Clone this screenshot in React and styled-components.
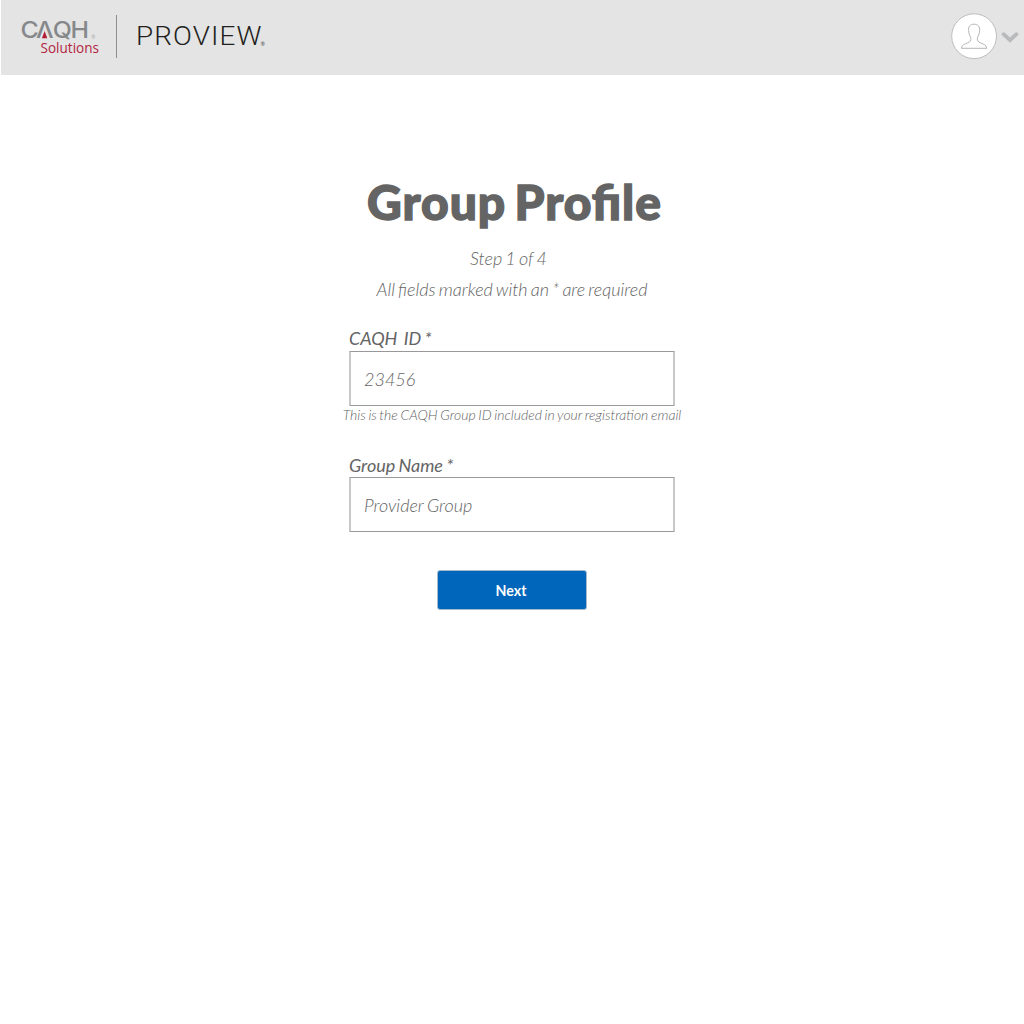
import React from "react";
import styled, { createGlobalStyle } from "styled-components";

const GlobalStyle = createGlobalStyle`
  *, *::before, *::after { box-sizing: border-box; }
  body { margin: 0; background: #fff; font-family: Lato, "Open Sans", sans-serif; color: #646464; }
`;

const Page = styled.div`
  min-height: 1024px;
  background: #fff;
`;

const Header = styled.header`
  display: flex;
  align-items: flex-start;
  justify-content: space-between;
  height: 75px;
  margin-left: 1px;
  background: #e4e4e4;
`;

const Brand = styled.div`
  display: flex;
  align-items: flex-start;
`;

const Logo = styled.svg`
  display: block;
  width: 90px;
  height: 44px;
  margin: 15px 0 0 19px;
`;

const Divider = styled.div`
  width: 1px;
  height: 43px;
  margin: 15px 0 0 6px;
  background: #8b8d8f;
`;

const Product = styled.svg`
  display: block;
  width: 136px;
  height: 40px;
  margin: 15px 0 0 16px;
`;

const Account = styled.button`
  display: flex;
  align-items: center;
  gap: 3px;
  margin: 13px 5px 0 0;
  padding: 0;
  border: 0;
  background: none;
`;

const Icon = styled.svg`
  display: block;
  flex: none;
  width: ${(p) => p.$w}px;
  height: ${(p) => p.$h}px;
`;

const Form = styled.form`
  display: flex;
  flex-direction: column;
  align-items: center;
  padding-top: 98px;
`;

const Title = styled.h1`
  margin: 0 0 12px;
  padding-left: 5px;
  font-family: "Lato Black", Lato, sans-serif;
  font-size: 48px;
  font-weight: 900;
  line-height: 58px;
  letter-spacing: 0.95px;
  word-spacing: -4px;
  font-feature-settings: "liga" 1;
  -webkit-text-stroke: 1.4px #646464;
  white-space: nowrap;
`;

const Note = styled.p`
  margin: 0;
  padding-right: ${(p) => p.$shift || 0}px;
  font-size: 18px;
  font-style: italic;
  font-weight: 300;
  line-height: 31px;
  word-spacing: -1.4px;
  white-space: nowrap;
`;

const Field = styled.div`
  display: flex;
  flex-direction: column;
  width: 326px;
  margin-top: ${(p) => p.$gap}px;
`;

const Label = styled.label`
  height: ${(p) => p.$h}px;
  font-size: 18px;
  font-style: italic;
  font-weight: 400;
  line-height: 24px;
  word-spacing: -1px;
  white-space: pre;
`;

const Input = styled.input`
  width: 326px;
  height: 55px;
  padding: 0 13px;
  border: solid #999;
  border-width: 1px 2px;
  border-left-color: #c8c8c8;
  border-right-color: #c8c8c8;
  border-radius: 0;
  background: #fff;
  color: #646464;
  font: italic 300 18px Lato, sans-serif;
  word-spacing: -1px;
  outline: none;
`;

const Hint = styled.p`
  align-self: center;
  margin: 0;
  font-size: 14px;
  font-style: italic;
  font-weight: 300;
  line-height: 17px;
  word-spacing: -0.9px;
  white-space: nowrap;
`;

const Next = styled.button`
  width: 150px;
  height: 40px;
  margin-top: 38px;
  padding: 0 2px 0 0;
  border: 1px solid #a5b9cd;
  border-radius: 3px;
  background: #0066bb;
  color: #fff;
  font: 700 14.2px Lato, sans-serif;
`;

export default function App() {
  return (
    <Page>
      <GlobalStyle />
      <Header>
        <Brand>
          <Logo viewBox="20 15 90 44" role="img" aria-label="CAQH Solutions">
            <g transform="translate(20.4 0) scale(1.08 1)" fill="#86888b" fontFamily="Inter, sans-serif" fontWeight="500" fontSize="23">
              <text x="0 14.4 30 46.3" y="38">CΛQH</text>
            </g>
            <path d="M44.6 31 L47.3 38.2 H41.9 Z" fill="#b01c38" />
            <text x="91.3" y="38.5" fill="#a5a6a8" fontFamily="Lato, sans-serif" fontSize="5">®</text>
            <text x="40.5" y="53" fill="#b3243f" fontFamily="Open Sans, sans-serif" fontSize="14.8" textLength="58.5" lengthAdjust="spacingAndGlyphs">Solutions</text>
          </Logo>
          <Divider />
          <Product viewBox="133 15 136 40" role="img" aria-label="PROVIEW">
            <text x="136" y="45" fill="#231f20" fontFamily="Roboto, sans-serif" fontWeight="300" fontSize="25.5" letterSpacing="1" textLength="126.5" lengthAdjust="spacingAndGlyphs">PROVIEW</text>
            <text x="260.5" y="46" fill="#444" fontFamily="Lato, sans-serif" fontSize="5.5">®</text>
          </Product>
        </Brand>
        <Account type="button" aria-label="Account">
          <Icon $w={47} $h={47} viewBox="0 0 47 47" fill="none">
            <circle cx="23.1" cy="23.2" r="22.4" fill="#fff" stroke="#bcbdc2" />
            <path
              d="M23 11.2c-4 0-5.8 2.5-5.4 6.2.2 3.6 1.5 5.8 2.2 7.4.4 2.6-.7 4.1-2.9 5-3.2 1.3-6.2 1.9-6.4 5.5h25.2c-.2-3.6-3.2-4.2-6.4-5.5-2.2-.9-3.3-2.4-2.9-5 .7-1.6 2-3.8 2.2-7.4.4-3.7-1.6-6.2-5.6-6.2z"
              stroke="#b4b6b6"
              strokeWidth="1"
            />
          </Icon>
          <Icon $w={18} $h={14} viewBox="0 0 18 14" fill="none">
            <path d="M2.6 4.2 9 10.2l6.4-6" stroke="#b9babc" strokeWidth="3.8" strokeLinecap="round" />
          </Icon>
        </Account>
      </Header>
      <Form onSubmit={(e) => e.preventDefault()}>
        <Title>Group Profile</Title>
        <Note $shift={7}>Step 1 of 4</Note>
        <Note>All fields marked with an * are required</Note>
        <Field $gap={21}>
          <Label $h={25} htmlFor="caqh-id">CAQH  ID *</Label>
          <Input id="caqh-id" defaultValue="23456" />
          <Hint>This is the CAQH Group ID included in your registration email</Hint>
        </Field>
        <Field $gap={30}>
          <Label $h={24} htmlFor="group-name">Group Name *</Label>
          <Input id="group-name" defaultValue="Provider Group" />
        </Field>
        <Next type="submit">Next</Next>
      </Form>
    </Page>
  );
}
